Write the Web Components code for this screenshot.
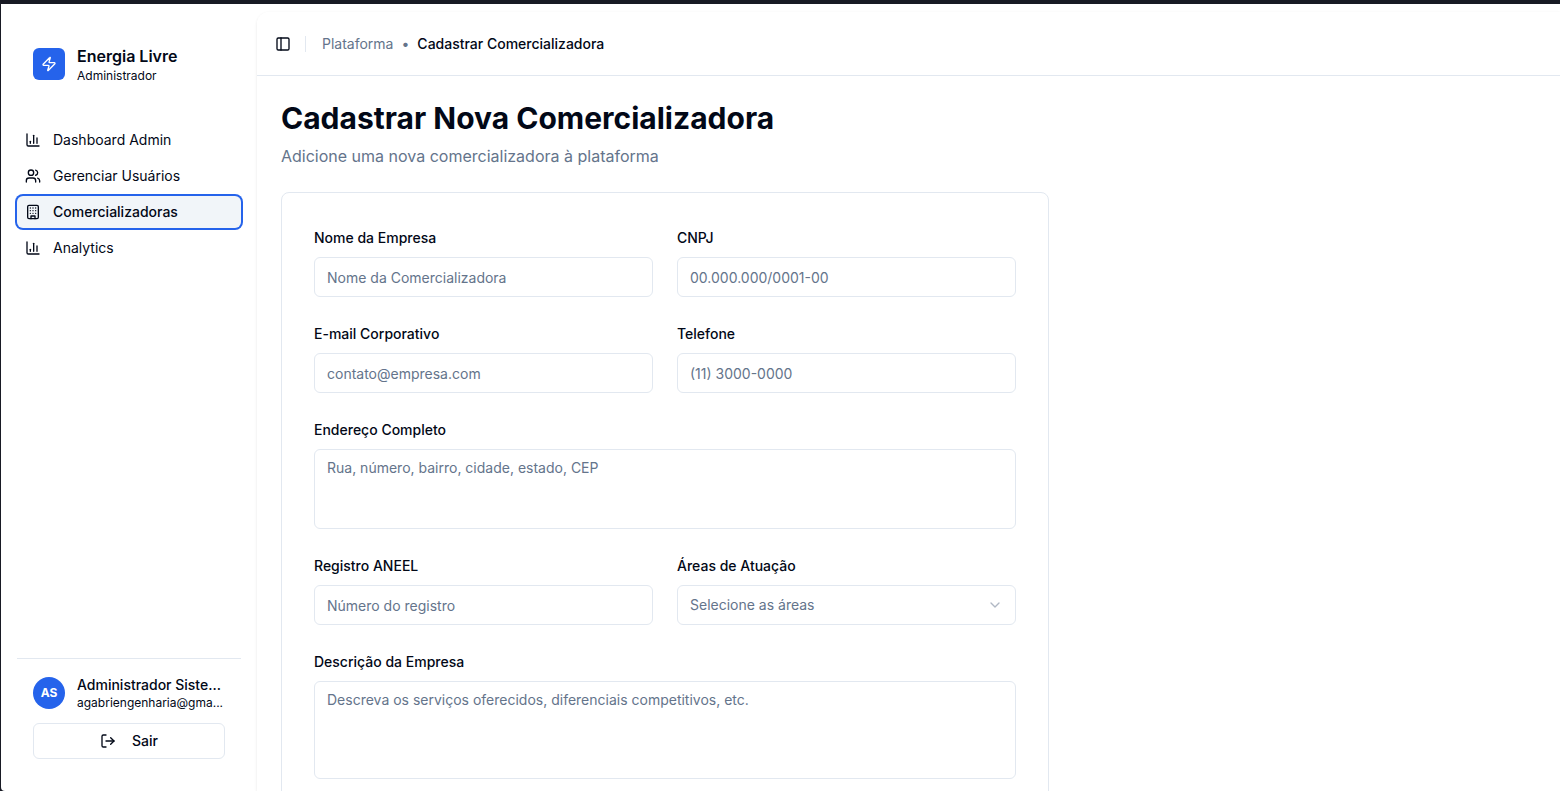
<!DOCTYPE html>
<html lang="pt-BR">
<head>
<meta charset="utf-8">
<meta name="viewport" content="width=device-width, initial-scale=1">
<title>Cadastrar Comercializadora</title>
<style>
  :root {
    --fg: #020817;
    --muted: #64748b;
    --border: #e2e8f0;
    --accent: #f1f5f9;
    --primary: #2563eb;
    --frame: #181a24;
  }
  body {
    margin: 0;
    background: var(--frame);
    color: var(--fg);
    font: 14px/20px Inter, "Liberation Sans", sans-serif;
  }
</style>
</head>
<body>
<app-shell>
  <app-sidebar slot="sidebar">
    <nav-item icon="chart">Dashboard Admin</nav-item>
    <nav-item icon="users">Gerenciar Usuários</nav-item>
    <nav-item icon="building" active>Comercializadoras</nav-item>
    <nav-item icon="chart">Analytics</nav-item>
    <user-panel slot="footer" initials="AS" name="Administrador Siste..." email="agabriengenharia@gma..."></user-panel>
  </app-sidebar>
  <page-header section="Plataforma" current="Cadastrar Comercializadora"></page-header>
  <page-intro>
    <span slot="title">Cadastrar Nova Comercializadora</span>
    Adicione uma nova comercializadora à plataforma
  </page-intro>
  <form-card>
    <form-field label="Nome da Empresa" placeholder="Nome da Comercializadora"></form-field>
    <form-field label="CNPJ" placeholder="00.000.000/0001-00"></form-field>
    <form-field label="E-mail Corporativo" type="email" placeholder="contato@empresa.com"></form-field>
    <form-field label="Telefone" type="tel" placeholder="(11) 3000-0000"></form-field>
    <form-field wide kind="textarea" label="Endereço Completo" placeholder="Rua, número, bairro, cidade, estado, CEP"></form-field>
    <form-field label="Registro ANEEL" placeholder="Número do registro"></form-field>
    <form-field kind="select" label="Áreas de Atuação" placeholder="Selecione as áreas"></form-field>
    <form-field wide tall kind="textarea" label="Descrição da Empresa" placeholder="Descreva os serviços oferecidos, diferenciais competitivos, etc."></form-field>
  </form-card>
</app-shell>

<script>
const ICONS = {
  zap: '<path d="M4 14a1 1 0 0 1-.78-1.63l9.9-10.2a.5.5 0 0 1 .86.46l-1.92 6.02A1 1 0 0 0 13 10h7a1 1 0 0 1 .78 1.63l-9.9 10.2a.5.5 0 0 1-.86-.46l1.92-6.02A1 1 0 0 0 11 14z"/>',
  chart: '<path d="M3 3v16a2 2 0 0 0 2 2h16"/><path d="M18 17V9"/><path d="M13 17V5"/><path d="M8 17v-3"/>',
  users: '<path d="M16 21v-2a4 4 0 0 0-4-4H6a4 4 0 0 0-4 4v2"/><circle cx="9" cy="7" r="4"/><path d="M22 21v-2a4 4 0 0 0-3-3.87"/><path d="M16 3.13a4 4 0 0 1 0 7.75"/>',
  building: '<rect width="16" height="20" x="4" y="2" rx="2"/><path d="M9 22v-4h6v4"/><path d="M8 6h.01M16 6h.01M12 6h.01M12 10h.01M12 14h.01M16 10h.01M16 14h.01M8 10h.01M8 14h.01"/>',
  logout: '<path d="M9 21H5a2 2 0 0 1-2-2V5a2 2 0 0 1 2-2h4"/><path d="m16 17 5-5-5-5"/><path d="M21 12H9"/>',
  panel: '<rect width="18" height="18" x="3" y="3" rx="2"/><path d="M9 3v18"/>',
  chevron: '<path d="m6 9 6 6 6-6"/>'
};

function define(name, render) {
  customElements.define(name, class extends HTMLElement {
    constructor() {
      super();
      this.attachShadow({ mode: 'open' });
    }
    connectedCallback() {
      this.shadowRoot.innerHTML = '<style>*{box-sizing:border-box}</style>' + render(this);
    }
  });
}
const attr = (el, name) => el.getAttribute(name) || '';

define('ui-icon', el => `
  <style>
    :host { display: block; flex: none; width: 16px; height: 16px; }
    svg { display: block; width: 100%; height: 100%; fill: none; stroke: currentColor; stroke-width: 2; stroke-linecap: round; stroke-linejoin: round; }
  </style>
  <svg viewBox="0 0 24 24" aria-hidden="true">${ICONS[attr(el, 'name')]}</svg>`);

define('app-shell', () => `
  <style>
    :host { display: block; box-sizing: border-box; height: 100vh; padding: 4px 0 0 1px; }
    .frame { display: flex; height: 100%; background: #fff; border-bottom-left-radius: 4px; overflow: hidden; }
    main { flex: 1; min-width: 0; margin-top: 8px; border-radius: 12px 0 0 0; background: #fff; box-shadow: 0 1px 3px rgb(0 0 0 / 10%); overflow: auto; scrollbar-width: none; }
  </style>
  <div class="frame"><slot name="sidebar"></slot><main><slot></slot></main></div>`);

define('app-sidebar', () => `
  <style>
    :host { display: flex; flex-direction: column; flex: none; box-sizing: border-box; width: 256px; padding: 16px; }
    header { display: flex; align-items: center; gap: 12px; padding: 24px 16px 16px; }
    .logo { display: grid; place-items: center; width: 32px; height: 32px; border-radius: 6px; background: var(--primary); color: #fff; }
    strong { display: block; font-size: 16px; line-height: 24px; font-weight: 600; }
    small { display: block; font-size: 12px; line-height: 16px; }
    nav { display: flex; flex-direction: column; gap: 4px; padding-top: 24px; }
    footer { margin-top: auto; border-top: 1px solid var(--border); padding: 16px; }
  </style>
  <header>
    <div class="logo"><ui-icon name="zap"></ui-icon></div>
    <div><strong>Energia Livre</strong><small>Administrador</small></div>
  </header>
  <nav><slot></slot></nav>
  <footer><slot name="footer"></slot></footer>`);

define('nav-item', el => `
  <style>
    :host { display: block; }
    a { display: flex; align-items: center; gap: 12px; height: 32px; padding: 0 8px; border-radius: 6px; color: inherit; text-decoration: none; }
    :host([active]) a { background: var(--accent); font-weight: 500; box-shadow: 0 0 0 2px var(--primary); }
  </style>
  <a href="#" ${el.hasAttribute('active') ? 'aria-current="page"' : ''}><ui-icon name="${attr(el, 'icon')}"></ui-icon><span><slot></slot></span></a>`);

define('user-panel', el => `
  <style>
    :host { display: block; }
    .user { display: flex; align-items: center; gap: 12px; margin-bottom: 12px; }
    .avatar { display: grid; place-items: center; flex: none; width: 32px; height: 32px; border-radius: 50%; background: var(--primary); color: #fff; font-size: 12px; font-weight: 700; }
    .who { flex: 1; min-width: 0; white-space: nowrap; }
    .name { font-weight: 500; }
    .mail { font-size: 12px; line-height: 16px; }
    button { display: flex; align-items: center; justify-content: center; gap: 16px; width: 100%; height: 36px; border: 1px solid var(--border); border-radius: 6px; background: #fff; color: inherit; font: inherit; font-weight: 500; }
  </style>
  <div class="user">
    <div class="avatar">${attr(el, 'initials')}</div>
    <div class="who"><div class="name">${attr(el, 'name')}</div><div class="mail">${attr(el, 'email')}</div></div>
  </div>
  <button type="button"><ui-icon name="logout"></ui-icon>Sair</button>`);

define('page-header', el => `
  <style>
    :host { display: flex; align-items: center; gap: 8px; box-sizing: border-box; height: 64px; padding: 0 12px; border-bottom: 1px solid var(--border); }
    button { display: grid; place-items: center; width: 28px; height: 28px; padding: 0; border: 0; border-radius: 6px; background: none; color: inherit; }
    .rule { width: 1px; height: 16px; background: var(--border); }
    nav { display: flex; align-items: center; gap: 8px; padding-left: 8px; }
    a, .dot { color: var(--muted); text-decoration: none; }
    .here { font-weight: 500; }
  </style>
  <button type="button" aria-label="Alternar menu"><ui-icon name="panel"></ui-icon></button>
  <div class="rule"></div>
  <nav><a href="#">${attr(el, 'section')}</a><span class="dot">•</span><span class="here">${attr(el, 'current')}</span></nav>`);

define('page-intro', () => `
  <style>
    :host { display: block; padding: 24px; }
    h1 { margin: 0 0 8px; font-size: 30px; line-height: 36px; font-weight: 700; }
    p { margin: 0; font-size: 16px; line-height: 24px; color: var(--muted); }
  </style>
  <h1><slot name="title"></slot></h1>
  <p><slot></slot></p>`);

define('form-card', () => `
  <style>
    :host { display: block; box-sizing: border-box; max-width: 768px; margin: 0 24px 24px; padding: 32px; border: 1px solid var(--border); border-radius: 8px; }
    form { display: grid; grid-template-columns: 1fr 1fr; gap: 24px; }
  </style>
  <form><slot></slot></form>`);

define('form-field', el => {
  const text = attr(el, 'placeholder');
  const kind = attr(el, 'kind');
  const control = kind === 'textarea' ? `<textarea id="control" placeholder="${text}"></textarea>`
    : kind === 'select' ? `<div class="select"><select id="control"><option>${text}</option></select><ui-icon name="chevron"></ui-icon></div>`
    : `<input id="control" type="${attr(el, 'type') || 'text'}" placeholder="${text}">`;
  return `
  <style>
    :host { display: block; min-width: 0; }
    :host([wide]) { grid-column: 1 / -1; }
    .label { margin-bottom: 8px; font-size: 16px; line-height: 24px; }
    label { font-size: 14px; line-height: 14px; font-weight: 500; }
    input, textarea, select { display: block; width: 100%; height: 40px; margin: 0; padding: 8px 12px; border: 1px solid var(--border); border-radius: 6px; background: #fff; color: var(--fg); font: inherit; outline: none; }
    textarea { height: 80px; resize: none; }
    :host([tall]) textarea { height: 98px; }
    select { appearance: none; color: var(--muted); }
    ::placeholder { color: var(--muted); opacity: 1; }
    .select { display: grid; align-items: center; }
    .select > * { grid-area: 1 / 1; }
    .select ui-icon { justify-self: end; margin-right: 13px; opacity: .5; color: var(--muted); pointer-events: none; }
  </style>
  <div class="label"><label for="control">${attr(el, 'label')}</label></div>
  ${control}`;
});
</script>
</body>
</html>
